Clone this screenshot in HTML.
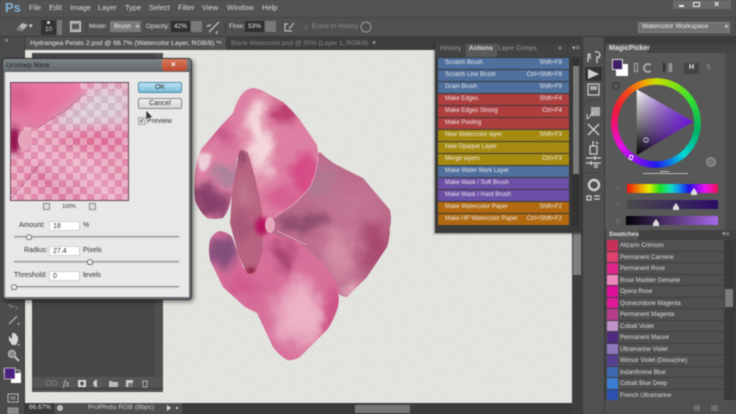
<!DOCTYPE html>
<html><head><meta charset="utf-8"><style>
*{box-sizing:border-box}
html,body{margin:0;padding:0;width:736px;height:414px;overflow:hidden;background:#454545}
#r{position:absolute;left:0;top:0;width:736px;height:414px;overflow:hidden;font-family:"Liberation Sans",sans-serif;filter:blur(.45px)}
#r div,#r span.a{position:absolute}
.t{white-space:nowrap;color:#d8d8d8;font-size:7px;line-height:10px}
.row{left:438px;width:131px;height:11px;color:#e8e8e8;font-size:6px;line-height:11px;padding-left:7px;white-space:nowrap}
.row b{position:absolute;right:7px;top:0;font-weight:normal}
.sw{left:606px;width:118px;height:11.5px;border-bottom:1px solid #3f3f3f;color:#dcdcdc;font-size:6px;line-height:12px;padding-left:14px;white-space:nowrap;background:#505050}
.sw i{position:absolute;left:1px;top:0;width:10.5px;height:10.5px}
.d{color:#333;font-size:7px;line-height:10px;white-space:nowrap}
.f{background:#fff;border:1px solid #d0d0d0;color:#333;font-size:7px;line-height:9px;padding-left:3px}
.tr{height:2px;background:#8f8f8f;border-bottom:1px solid #c8c8c8}
.h{width:6px;height:6px;background:#eee;border:1px solid #777;border-radius:50% 50% 2px 2px}
</style></head><body><div id="r">

<!-- menu bar -->
<div style="left:0;top:0;width:736px;height:17px;background:#535353"></div>
<div class="t" style="left:5px;top:1px;font-size:13px;line-height:14px;font-weight:bold;color:#7fb2d8">Ps</div>
<div class="t" style="left:29px;top:3px;font-size:7.5px">File</div>
<div class="t" style="left:49px;top:3px;font-size:7.5px">Edit</div>
<div class="t" style="left:70px;top:3px;font-size:7.5px">Image</div>
<div class="t" style="left:98px;top:3px;font-size:7.5px">Layer</div>
<div class="t" style="left:125px;top:3px;font-size:7.5px">Type</div>
<div class="t" style="left:149px;top:3px;font-size:7.5px">Select</div>
<div class="t" style="left:178px;top:3px;font-size:7.5px">Filter</div>
<div class="t" style="left:202px;top:3px;font-size:7.5px">View</div>
<div class="t" style="left:227px;top:3px;font-size:7.5px">Window</div>
<div class="t" style="left:262px;top:3px;font-size:7.5px">Help</div>
<div style="left:673px;top:0;width:58px;height:9px;background:#6a6a6a"></div>
<div style="left:679px;top:5px;width:5px;height:2px;background:#eee"></div>
<div style="left:693px;top:2px;width:7px;height:5px;border:1px solid #eee"></div>
<div class="t" style="left:714px;top:-1px;font-size:9px;font-weight:bold;color:#eee">×</div>

<!-- options bar -->
<div style="left:0;top:17px;width:736px;height:20px;background:#505050;border-top:1px solid #444;border-bottom:1px solid #3a3a3a"></div>
<svg style="position:absolute;left:14px;top:21px" width="16" height="12"><path d="M2 9 L8 2 L14 4 L8 10 Z" fill="#b5b5b5"/><path d="M2 9 L5 6 L9 8 L7 10Z" fill="#777"/></svg>
<div class="t" style="left:29px;top:22px;color:#ddd">▾</div>
<div style="left:41px;top:20px;width:15px;height:15px;background:#333"></div>
<div style="left:47px;top:21px;width:3px;height:3px;border-radius:2px;background:#ddd"></div>
<div class="t" style="left:45px;top:25px;font-size:6.5px">10</div>
<div style="left:57px;top:20px;width:5px;height:15px;background:#777"></div>
<div style="left:70px;top:21px;width:11px;height:11px;background:#a5a5a5;border:1px solid #ccc"></div>
<div style="left:72px;top:24px;width:7px;height:5px;background:#555"></div>
<div style="left:86px;top:22px;width:1px;height:11px;background:#3f3f3f"></div>
<div class="t" style="left:89px;top:22px;font-size:6.5px;color:#ddd">Mode:</div>
<div style="left:110px;top:21px;width:31px;height:11px;background:#7a7a7a"></div>
<div class="t" style="left:114px;top:22px;font-size:6.5px;color:#eee">Brush</div>
<div class="t" style="left:135px;top:22px;font-size:6px;color:#eee">≑</div>
<div class="t" style="left:146px;top:22px;font-size:6.5px;color:#ddd">Opacity:</div>
<div style="left:171px;top:21px;width:19px;height:11px;background:#2f2f2f"></div>
<div class="t" style="left:174px;top:22px;font-size:6.5px;color:#eee">42%</div>
<div style="left:191px;top:21px;width:11px;height:11px;background:#7a7a7a"></div>
<svg style="position:absolute;left:207px;top:20px" width="14" height="14"><path d="M2 12 L12 2 M4 5 A6 6 0 1 0 10 11" stroke="#bbb" stroke-width="1.4" fill="none"/></svg>
<div style="left:225px;top:22px;width:1px;height:11px;background:#3f3f3f"></div>
<div class="t" style="left:229px;top:22px;font-size:6.5px;color:#ddd">Flow:</div>
<div style="left:245px;top:21px;width:19px;height:11px;background:#2f2f2f"></div>
<div class="t" style="left:248px;top:22px;font-size:6.5px;color:#eee">53%</div>
<div style="left:265px;top:21px;width:11px;height:11px;background:#7a7a7a"></div>
<svg style="position:absolute;left:282px;top:20px" width="14" height="14"><path d="M2 4 H6 M3 4 V11 H10 M7 9 L12 3" stroke="#bbb" stroke-width="1.2" fill="none"/></svg>
<div style="left:303px;top:23px;width:6px;height:9px;background:#5d5d5d;border:1px solid #484848"></div>
<div class="t" style="left:312px;top:22px;font-size:6.5px;color:#8e8e8e">Erase to History</div>
<svg style="position:absolute;left:360px;top:21px" width="14" height="12"><circle cx="6" cy="6" r="5" stroke="#999" fill="none"/></svg>
<div style="left:638px;top:22px;width:92px;height:11px;background:#707070;border:1px solid #808080"></div>
<div class="t" style="left:642px;top:22px;font-size:6.6px;color:#eee">Watercolor Workspace</div>
<div class="t" style="left:724px;top:22px;font-size:6px;color:#eee">≑</div>

<!-- tabs -->
<div style="left:0;top:37px;width:736px;height:13px;background:#3e3e3e"></div>
<div style="left:25px;top:37px;width:201px;height:13px;background:#535353"></div>
<div class="t" style="left:30px;top:39px;font-size:6.8px;color:#e8e8e8">Hydrangea Petals 2.psd @ 66.7% (Watercolor Layer, RGB/8) *</div>
<div class="t" style="left:218px;top:39px;font-size:7px;color:#ccc">×</div>
<div class="t" style="left:231px;top:39px;font-size:6.6px;color:#8a8a8a">Blank Watercolor.psd @ 50% (Layer 1, RGB/8)</div>
<div class="t" style="left:372px;top:39px;font-size:7px;color:#ccc">×</div>

<!-- left toolbar -->
<div style="left:0;top:37px;width:25px;height:377px;background:#4c4c4c;border-right:1px solid #3a3a3a"></div>
<div class="t" style="left:5px;top:36px;font-size:6px;color:#ccc">»</div>

<!-- canvas -->
<div style="left:25px;top:50px;width:547px;height:353px;background:#e4e5e0"></div>
<svg style="position:absolute;left:25px;top:50px" width="547" height="353"><filter id="pp"><feTurbulence type="fractalNoise" baseFrequency=".35 .5" numOctaves="3" seed="4"/><feColorMatrix values="0 0 0 0 .45 0 0 0 0 .45 0 0 0 0 .42 .5 .5 0 0 -.42"/></filter><rect width="547" height="353" filter="url(#pp)" opacity=".35"/></svg>

<!-- flower -->
<svg style="position:absolute;left:0;top:0" width="736" height="414" viewBox="0 0 736 414">
<defs>
<filter id="b6" x="-100%" y="-100%" width="300%" height="300%"><feGaussianBlur stdDeviation="8"/></filter>
<filter id="b3" x="-100%" y="-100%" width="300%" height="300%"><feGaussianBlur stdDeviation="5"/></filter>
<filter id="b2" x="-100%" y="-100%" width="300%" height="300%"><feGaussianBlur stdDeviation="2"/></filter>
<filter id="wet" x="-10%" y="-10%" width="120%" height="120%"><feTurbulence type="fractalNoise" baseFrequency=".045" numOctaves="3" seed="7" result="n"/><feDisplacementMap in="SourceGraphic" in2="n" scale="20" xChannelSelector="R" yChannelSelector="G"/></filter>
<filter id="edge" x="-5%" y="-5%" width="110%" height="110%"><feGaussianBlur stdDeviation=".5"/></filter>
<clipPath id="pr"><path d="M320 152 Q328 160 337 165 Q350 172 363 178 L390 210 Q392 220 390 227 Q390 238 387 247 L367 277 L347 297 Q342 297 338 293 L320 300 L262 240 L262 215 L300 170Z"/></clipPath>
<clipPath id="pt"><path d="M252 88 Q258 88 265 92 L283 102 Q292 110 300 120 L317 145 Q319 155 318 163 Q316 176 310 187 Q302 197 293 205 L275 217 L268 228 L258 225 L255 197 L248 160 Q243 155 237 157 L235 180 L230 203 Q228 212 223 218 Q214 220 207 218 Q198 210 195 200 Q193 180 197 160 Q199 152 203 147 L220 127 L233 113 Q236 103 240 97 Q245 89 252 88Z"/></clipPath>
<clipPath id="pb"><path d="M220 231 Q228 232 232 237 L243 267 Q248 274 253 273 Q260 262 263 247 L262 230 L277 235 L300 243 L323 263 L337 283 Q340 295 338 307 Q334 320 327 330 L300 357 Q293 361 287 360 Q279 355 273 347 L257 313 L245 307 L223 287 L210 260 Q208 248 210 240 Q214 232 220 231Z"/></clipPath>
<clipPath id="ps"><path d="M240 150 Q245 150 248 153 L255 177 L262 210 L263 250 Q260 263 255 272 Q251 275 247 273 Q241 262 237 250 L230 223 L232 193 L237 163 Q238 155 240 150Z"/></clipPath>
</defs>
<g clip-path="url(#pr)"><g filter="url(#wet)">
<rect x="240" y="130" width="170" height="190" fill="#bd6c8b"/>
<ellipse cx="375" cy="248" rx="20" ry="24" fill="#a84a70" filter="url(#b6)"/>
<ellipse cx="350" cy="205" rx="26" ry="18" fill="#c37594" filter="url(#b6)"/>
<ellipse cx="340" cy="252" rx="18" ry="22" fill="#d590a9" filter="url(#b6)"/>
<ellipse cx="350" cy="290" rx="12" ry="10" fill="#dfa6b6" filter="url(#b3)"/>
<ellipse cx="300" cy="222" rx="28" ry="7" fill="#87486b" filter="url(#b3)"/>
<ellipse cx="322" cy="183" rx="14" ry="16" fill="#ad7b94" filter="url(#b6)"/>
</g></g>
<g clip-path="url(#pb)"><g filter="url(#wet)">
<rect x="190" y="215" width="165" height="160" fill="#d7709a"/>
<ellipse cx="300" cy="315" rx="26" ry="32" fill="#ecb2c6" filter="url(#b6)"/>
<ellipse cx="222" cy="252" rx="16" ry="17" fill="#82507c" filter="url(#b3)"/>
<ellipse cx="284" cy="256" rx="10" ry="20" fill="#a84472" filter="url(#b3)" transform="rotate(-25 284 256)"/>
<ellipse cx="245" cy="285" rx="20" ry="12" fill="#d0558a" filter="url(#b6)"/>
<ellipse cx="333" cy="310" rx="8" ry="24" fill="#cc4f82" filter="url(#b3)"/>
</g></g>
<g clip-path="url(#pt)"><g filter="url(#wet)">
<rect x="180" y="75" width="155" height="160" fill="#dd80a3"/>
<path d="M252 95 L264 95 L272 165 L258 185 L247 130Z" fill="#f5dbdd" filter="url(#b3)"/>
<ellipse cx="285" cy="112" rx="15" ry="11" fill="#bb3d6f" filter="url(#b3)"/>
<ellipse cx="305" cy="175" rx="13" ry="24" fill="#d54b86" filter="url(#b3)"/>
<ellipse cx="282" cy="200" rx="16" ry="12" fill="#d2558a" filter="url(#b6)"/>
<ellipse cx="222" cy="134" rx="15" ry="14" fill="#cb5c8c" filter="url(#b3)"/>
<ellipse cx="210" cy="203" rx="18" ry="18" fill="#87406a" filter="url(#b3)"/>
<ellipse cx="226" cy="172" rx="11" ry="9" fill="#a28399" filter="url(#b3)"/>
<ellipse cx="203" cy="160" rx="8" ry="9" fill="#ecd0d8" filter="url(#b2)"/>
</g></g>
<path d="M318 157 Q316 176 310 187 Q302 197 293 205 L275 217" fill="none" stroke="#eec7d3" stroke-width=".7" opacity=".8"/>
<path d="M277 231 L307 245" fill="none" stroke="#e9c0cf" stroke-width=".7" opacity=".8"/>
<g clip-path="url(#ps)"><g filter="url(#wet)">
<rect x="215" y="135" width="60" height="150" fill="#b76481"/>
<ellipse cx="240" cy="158" rx="7" ry="9" fill="#9a5070" filter="url(#b2)"/>
<ellipse cx="245" cy="195" rx="10" ry="15" fill="#c0778d" filter="url(#b3)"/>
<ellipse cx="241" cy="228" rx="9" ry="14" fill="#a55676" filter="url(#b3)"/>
</g><ellipse cx="251" cy="271" rx="5" ry="3" fill="#8d1638" filter="url(#b2)"/></g>
<ellipse cx="262" cy="226" rx="7" ry="9" fill="#b4155e" filter="url(#b2)"/>
<ellipse cx="270" cy="225" rx="5" ry="8" fill="#e5a8bb"/>
</svg>

<!-- layers panel behind dialog -->
<div style="left:32px;top:53px;width:131px;height:339px;background:#474747;border-right:8px solid #505050"></div>
<div style="left:32px;top:377px;width:131px;height:15px;background:#555"></div>
<div style="left:32px;top:388px;width:131px;height:4px;background:#505050;border-top:1px solid #3a3a3a"></div>
<svg style="position:absolute;left:40px;top:378px" width="115" height="11">
<path d="M6 5 a2.5 2.5 0 1 1 0 .1 M12 5 a2.5 2.5 0 1 1 0 .1" stroke="#777" fill="none"/>
<text x="23" y="8.5" font-family="Liberation Serif" font-style="italic" font-size="9" fill="#ccc">fx</text>
<rect x="38" y="2" width="8" height="7" fill="#ddd"/><circle cx="42" cy="5.500" r="2" fill="#555"/>
<circle cx="57" cy="5.500" r="3.800" fill="#ccc"/><path d="M57 1.700 A3.800 3.800 0 0 1 57 9.300Z" fill="#555"/>
<path d="M69 3 h3 l1 1 h5 v5 h-9z" fill="#bbb"/>
<rect x="86" y="2" width="7" height="7" fill="#ccc"/><rect x="88" y="5" width="5" height="4" fill="#777"/>
<path d="M102 3 h6 M103 3 v6 h4 v-6" stroke="#aaa" fill="none"/>
</svg>

<!-- toolbar icons below dialog -->
<svg style="position:absolute;left:0;top:298px" width="25" height="116">
<path d="M9 6 l2 3 l3 -1 M16 9 l2 2" stroke="#bbb" fill="none" stroke-dasharray="1.500 1"/>
<path d="M9 26 L17 18" stroke="#ccc" stroke-width="1"/><rect x="18" y="25" width="1.500" height="1.500" fill="#ccc"/>
<path d="M9 38 v4 l3 5 h4 l2-4 v-5 h-1.500 v3 v-5 h-1.500 v4 v-5 h-1.500 v5 v-5 h-1.500 v6z" fill="#d8d8d8"/>
<rect x="18" y="46" width="1.500" height="1.500" fill="#ccc"/>
<circle cx="12" cy="56" r="3.600" fill="#8a8a8a" stroke="#c5c5c5"/><path d="M15 59 L19 63" stroke="#c5c5c5" stroke-width="2"/>
<rect x="4" y="71" width="4" height="4" fill="#222" stroke="#ccc" stroke-width=".7"/><rect x="7" y="74" width="3" height="3" fill="#eee"/>
<path d="M15 72 h3 a2 2 0 0 1 2 2 v2" stroke="#ccc" fill="none"/>
<rect x="11" y="75" width="10" height="10" fill="#fff"/>
<rect x="4.500" y="69" width="10.500" height="11" fill="#4d2180" stroke="#ddd" stroke-width=".7" transform="translate(0 1)"/>
<rect x="8" y="96" width="10" height="8" fill="#444" stroke="#bbb"/><rect x="10" y="98" width="6" height="4" fill="#777"/>
<rect x="8" y="110" width="10" height="6" fill="#888" stroke="#bbb" stroke-width=".6"/>
</svg>

<!-- dialog -->
<div style="left:2px;top:58px;width:190px;height:242px;background:#6d7477;border:1px solid #333;border-radius:4px;box-shadow:2px 2px 4px rgba(0,0,0,.45)"></div>
<div style="left:3px;top:59px;width:188px;height:13px;background:linear-gradient(#7d8487,#5f6669);border-radius:3px 3px 0 0"></div>
<div class="t" style="left:6px;top:61px;font-size:6.8px;color:#222">Unsharp Mask</div>
<div style="left:162px;top:59px;width:25px;height:12px;background:linear-gradient(#d87a5a,#c04a30);border-radius:0 0 3px 3px"></div>
<div class="t" style="left:171px;top:60px;color:#fff;font-weight:bold;font-size:8px">×</div>
<div style="left:5px;top:72px;width:184px;height:225px;background:#e8e8e8"></div>

<!-- preview -->
<svg style="position:absolute;left:10px;top:82px" width="119" height="119" viewBox="0 0 119 119">
<defs>
<pattern id="ck" width="14" height="14" patternUnits="userSpaceOnUse"><rect width="14" height="14" fill="rgba(235,225,230,.12)"/><rect width="7" height="7" fill="rgba(255,255,255,.34)"/><rect x="7" y="7" width="7" height="7" fill="rgba(255,255,255,.34)"/></pattern>
<clipPath id="cc"><path d="M0 44 L28 46 L56 28 L73 13 L69 0 H119 V119 H0Z"/></clipPath>
<filter id="pb2" x="-60%" y="-60%" width="220%" height="220%"><feGaussianBlur stdDeviation="7"/></filter>
<filter id="pb3" x="-60%" y="-60%" width="220%" height="220%"><feGaussianBlur stdDeviation="3"/></filter>
</defs>
<rect width="119" height="119" fill="#df7fa3"/>
<ellipse cx="40" cy="15" rx="40" ry="25" fill="#e7739f" filter="url(#pb2)"/>
<ellipse cx="66" cy="6" rx="15" ry="8" fill="#ef7caa" filter="url(#pb2)"/>
<ellipse cx="8" cy="15" rx="12" ry="12" fill="#d35c8c" filter="url(#pb2)"/>
<path d="M40 42 L85 5 H119 V40 L60 48Z" fill="#cdb8c6" filter="url(#pb2)"/>
<ellipse cx="85" cy="58" rx="34" ry="8" fill="#d64f80" filter="url(#pb2)"/>
<ellipse cx="45" cy="100" rx="28" ry="9" fill="#cf4f84" filter="url(#pb2)" transform="rotate(35 45 100)"/>
<path d="M28 70 L62 112 M60 72 L105 119" stroke="#efc4d6" stroke-width="5" filter="url(#pb2)"/>
<rect width="119" height="119" fill="url(#ck)" clip-path="url(#cc)"/>
<ellipse cx="4" cy="58" rx="7" ry="14" fill="#95124f" filter="url(#pb3)"/>
<ellipse cx="15" cy="58" rx="7" ry="10" fill="#e5a3bc"/>
<path d="M0 118 L30 82 M28 46 L56 28 L73 13" stroke="#7a2d55" stroke-width=".6" opacity=".5" fill="none"/>
<rect x=".5" y=".5" width="118" height="118" fill="none" stroke="#6a4a5a"/>
</svg>
<div style="left:43px;top:203px;width:7px;height:7px;border:1px solid #888;background:#ddd"></div>
<div class="d" style="left:62px;top:202px;font-size:5.500px">100%</div>
<div style="left:89px;top:203px;width:7px;height:7px;border:1px solid #888;background:#ddd"></div>

<!-- buttons -->
<div style="left:138px;top:82px;width:44px;height:11px;background:linear-gradient(#bfe4f4,#79bcd8);border:1px solid #4e8aa8;border-radius:2px"></div>
<div class="d" style="left:138px;top:83px;width:44px;text-align:center;font-size:7px">OK</div>
<div style="left:138px;top:98px;width:44px;height:11px;background:linear-gradient(#efefef,#d5d5d5);border:1px solid #888;border-radius:2px"></div>
<div class="d" style="left:138px;top:99px;width:44px;text-align:center;font-size:7px">Cancel</div>
<div style="left:138px;top:117px;width:8px;height:8px;background:#d5d5d5;border:1px solid #aaa"></div>
<div class="d" style="left:139px;top:117px;font-size:7px">✓</div>
<div class="d" style="left:147px;top:117px;font-size:7px">Preview</div>
<svg style="position:absolute;left:145px;top:109px" width="10" height="14"><path d="M1 1 V11 L3.500 9 L5 12.500 L6.500 12 L5 8.500 H8Z" fill="#333" stroke="#eee" stroke-width=".6"/></svg>

<!-- controls -->
<div class="d" style="left:19px;top:221px">Amount:</div>
<div class="f" style="left:49px;top:221px;width:31px;height:10px">18</div>
<div class="d" style="left:83px;top:221px">%</div>
<div class="tr" style="left:14px;top:236px;width:165px"></div>
<div class="h" style="left:26px;top:234px"></div>
<div class="d" style="left:24px;top:246px">Radius:</div>
<div class="f" style="left:49px;top:246px;width:31px;height:10px">27.4</div>
<div class="d" style="left:83px;top:246px">Pixels</div>
<div class="tr" style="left:14px;top:261px;width:165px"></div>
<div class="h" style="left:87px;top:259px"></div>
<div class="d" style="left:14px;top:271px">Threshold:</div>
<div class="f" style="left:49px;top:271px;width:31px;height:10px">0</div>
<div class="d" style="left:83px;top:271px">levels</div>
<div class="tr" style="left:14px;top:286px;width:165px"></div>
<div class="h" style="left:11px;top:284px"></div>

<!-- status bar -->
<div style="left:25px;top:403px;width:547px;height:11px;background:#4f4f4f"></div>
<div style="left:25px;top:403px;width:29px;height:11px;background:#3a3a3a"></div>
<div class="t" style="left:29px;top:403px;font-size:6.500px;color:#ddd">66.67%</div>
<div style="left:57px;top:405px;width:6px;height:6px;border-radius:50%;background:#bbb"></div>
<div class="t" style="left:88px;top:403px;font-size:6.800px;color:#ccc">ProPhoto RGB (8bpc)</div>
<div style="left:167px;top:405px;width:0;height:0;border-left:4px solid #ddd;border-top:3px solid transparent;border-bottom:3px solid transparent"></div>
<div style="left:176px;top:407px;width:2px;height:2px;background:#ccc"></div>
<div style="left:182px;top:403px;width:390px;height:11px;background:#3b3b3b"></div>
<div style="left:355px;top:405px;width:55px;height:8px;background:#767676"></div>

<!-- scroll + dock + right panels base -->
<div style="left:572px;top:50px;width:10px;height:364px;background:#3e3e3e"></div>
<div style="left:573px;top:65px;width:8px;height:210px;background:#7e7e7e"></div>
<div style="left:582px;top:37px;width:23px;height:377px;background:#505050;border-left:1px solid #3a3a3a;border-right:1px solid #3a3a3a"></div>
<div style="left:605px;top:37px;width:131px;height:377px;background:#3c3c3c"></div>

<!-- actions panel -->
<div style="left:435px;top:43px;width:147px;height:190px;background:#3a3a3a;box-shadow:-1px 1px 2px rgba(0,0,0,.4)"></div>
<div style="left:435px;top:43px;width:147px;height:14px;background:#434343"></div>
<div style="left:466px;top:44px;width:31px;height:13px;background:#5a5a5a"></div>
<div class="t" style="left:440px;top:44px;font-size:6.800px;color:#999">History</div>
<div class="t" style="left:469px;top:44px;font-size:6.500px;font-weight:bold;color:#ddd">Actions</div>
<div class="t" style="left:498px;top:44px;font-size:6.500px;color:#999">Layer Comps</div>
<div class="t" style="left:558px;top:44px;font-size:7px;color:#ccc">»</div>
<div class="t" style="left:572px;top:44px;font-size:7px;color:#aaa">▾≡</div>
<div class="row" style="top:58px;background:#4f6f9c">Scratch Brush<b>Shift+F8</b></div>
<div class="row" style="top:70px;background:#4f6f9c">Scratch Line Brush<b>Ctrl+Shift+F8</b></div>
<div class="row" style="top:82px;background:#4f6f9c">Grain Brush<b>Shift+F9</b></div>
<div class="row" style="top:94px;background:#af3f3f">Make Edges<b>Shift+F4</b></div>
<div class="row" style="top:106px;background:#af3f3f">Make Edges Strong<b>Ctrl+F4</b></div>
<div class="row" style="top:118px;background:#af3f3f">Make Pooling</div>
<div class="row" style="top:130px;background:#a68a10">New Watercolor layer<b>Shift+F3</b></div>
<div class="row" style="top:142px;background:#a68a10">New Opaque Layer</div>
<div class="row" style="top:154px;background:#a68a10">Merge layers<b>Ctrl+F3</b></div>
<div class="row" style="top:166px;background:#4f6f9c">Make Water Mark Layer</div>
<div class="row" style="top:178px;background:#6c4fa6">Make Mask / Soft Brush</div>
<div class="row" style="top:190px;background:#6c4fa6">Make Mask / Hard Brush</div>
<div class="row" style="top:202px;background:#b0690f">Make Watercolor Paper<b>Shift+F2</b></div>
<div class="row" style="top:214px;background:#b0690f">Make HP Watercolor Paper<b>Ctrl+Shift+F2</b></div>
<div style="left:572px;top:58px;width:7px;height:168px;background:#333"></div>
<div style="left:573px;top:66px;width:6px;height:108px;background:#7b7b7b"></div>

<!-- dock icons -->
<svg style="position:absolute;left:583px;top:40px" width="21" height="165" fill="none" stroke="#cfcfcf">
<path d="M5 14 v8 M5 14 h2 v5 M12 12 a3 3 0 0 1 3 6 M14 16 v7" stroke-width="1.300"/>
<rect x="2" y="27" width="17" height="14" fill="#333" stroke="none"/><path d="M5 29 L16 34 L5 39Z" fill="#d0d0d0" stroke="none"/>
<rect x="5" y="44" width="11" height="11" stroke-width="1.200"/><rect x="7" y="46" width="7" height="4" fill="#aaa" stroke="none"/>
<path d="M2 60 H20" stroke="#444"/>
<rect x="8" y="67" width="9" height="9" fill="#aaa" stroke="none"/><path d="M5 79 L10 72 M4 79 V74" />
<path d="M5 84 L16 95 M16 84 L5 95" stroke-width="1.400"/>
<path d="M10 101 v5 M7 106 h7 v8 h-7z M13 102 l2 2" stroke-width="1.300"/>
<path d="M3 118 H18 M3 123 H18 M12 116 v4 M8 121 v4" stroke-width="1.300"/><circle cx="13" cy="126" r="1.500"/>
<path d="M2 133 H20" stroke="#444"/>
<circle cx="11" cy="145" r="5" stroke-width="2.400"/>
<path d="M4 156 h4 v4 h-4z M11 156 h6 M11 159 h6" stroke-width="1.200"/>
</svg>

<!-- magic picker -->
<div style="left:605px;top:44px;width:120px;height:186px;background:#585858"></div>
<div style="left:605px;top:44px;width:131px;height:9px;background:#444"></div>
<div style="left:606px;top:44px;width:41px;height:10px;background:#585858"></div>
<div class="t" style="left:609px;top:44px;font-size:7px;font-weight:bold;color:#e0e0e0;line-height:10px">MagicPicker</div>
<div style="left:725px;top:53px;width:11px;height:177px;background:#4a4a4a"></div>
<div style="left:616px;top:64px;width:12px;height:12px;background:#fff"></div>
<div style="left:612px;top:59px;width:11px;height:11px;background:#3c1e64;border:1px solid #ddd"></div>
<div style="left:634px;top:63px;width:4px;height:9px;border:1px solid #aaa"></div>
<div style="left:643px;top:63px;width:10px;height:10px;border-radius:50%;border:2.500px solid #aaa;border-right-color:#555"></div>
<div style="left:663px;top:63px;width:9px;height:9px;background:linear-gradient(90deg,#222,#aaa)"></div>
<div style="left:684px;top:63px;width:15px;height:11px;background:#444"></div>
<div class="t" style="left:689px;top:63px;font-size:7px;font-weight:bold;color:#eee">H</div>
<div class="t" style="left:706px;top:63px;font-size:7px;color:#999">S</div>
<div style="left:612px;top:82px;width:8px;height:8px;border-radius:50%;border:1.500px solid #333"></div>
<div style="left:611px;top:78px;width:90px;height:90px;border-radius:50%;background:conic-gradient(#c8e000 0deg,#38e030 55deg,#00b060 100deg,#00d8d8 140deg,#2018f0 180deg,#8010f0 205deg,#e010e8 235deg,#f0108c 262deg,#f01838 290deg,#f05018 320deg,#f0a800 345deg,#c8e000 360deg);-webkit-mask:radial-gradient(circle,transparent 38px,#000 38.500px);mask:radial-gradient(circle,transparent 38px,#000 38.500px)"></div>
<svg style="position:absolute;left:630px;top:85px" width="70" height="76" viewBox="0 0 70 76">
<defs><linearGradient id="wk" x1="0" y1="0" x2="0" y2="1"><stop offset="0" stop-color="#fff"/><stop offset="1" stop-color="#000"/></linearGradient>
<linearGradient id="pu" x1="0" y1="0" x2="1" y2="0"><stop offset="0" stop-color="#6a10d8" stop-opacity="0"/><stop offset="1" stop-color="#6a10d8"/></linearGradient></defs>
<path d="M6.700 4.300 L63.300 36.700 L6.700 70Z" fill="url(#wk)"/>
<path d="M6.700 4.300 L63.300 36.700 L6.700 70Z" fill="url(#pu)"/>
<circle cx="16" cy="55" r="2.200" fill="none" stroke="#ddd" stroke-width=".8"/>
</svg>
<div style="left:629px;top:155px;width:4px;height:5px;border:1px solid #fff;background:#7a10e0;transform:rotate(20deg)"></div>
<div style="left:706px;top:157px;width:10px;height:10px;border-radius:50%;background:#777;border:1px solid #999"></div>
<div style="left:643px;top:173px;width:45px;height:1px;background:#bbb"></div>
<div style="left:660px;top:171px;width:9px;height:1px;background:#bbb"></div>
<div class="t" style="left:616px;top:184px;font-size:6.500px;color:#777">H</div>
<div class="t" style="left:616px;top:200px;font-size:6.500px;color:#777">S</div>
<div class="t" style="left:616px;top:217px;font-size:6.500px;color:#777">B</div>
<div style="left:627px;top:184px;width:91px;height:9px;background:linear-gradient(90deg,#f01010,#f0a000 15%,#e8f000 24%,#20e020 36%,#10e0c0 48%,#1090f0 57%,#2010e8 68%,#8010f0 76%,#f010f0 86%,#f01050 100%)"></div>
<div style="left:627px;top:200px;width:91px;height:9px;background:linear-gradient(90deg,#4a4a4a,#2c0c68)"></div>
<div style="left:626px;top:216px;width:92px;height:9px;background:linear-gradient(90deg,#050208,#a868e8)"></div>
<div style="left:691px;top:188px;width:6px;height:7px;background:#ddd;clip-path:polygon(50% 0,100% 60%,100% 100%,0 100%,0 60%)"></div>
<div style="left:673px;top:203px;width:6px;height:7px;background:#ddd;clip-path:polygon(50% 0,100% 60%,100% 100%,0 100%,0 60%)"></div>
<div style="left:653px;top:219px;width:6px;height:7px;background:#ddd;clip-path:polygon(50% 0,100% 60%,100% 100%,0 100%,0 60%)"></div>

<!-- swatches -->
<div style="left:605px;top:230px;width:131px;height:10px;background:#424242"></div>
<div style="left:606px;top:230px;width:32px;height:10px;background:#565656"></div>
<div class="t" style="left:609px;top:230px;font-size:6.500px;font-weight:bold;color:#ddd">Swatches</div>
<div class="t" style="left:722px;top:230px;font-size:7px;color:#aaa">▾≡</div>
<div class="sw" style="top:240px"><i style="background:#c93059"></i>Alizarin Crimson</div>
<div class="sw" style="top:251.500px"><i style="background:#e0406e"></i>Permanent Carmine</div>
<div class="sw" style="top:263px"><i style="background:#e0268a"></i>Permanent Rose</div>
<div class="sw" style="top:274.500px"><i style="background:#ec88bc"></i>Rose Madder Genuine</div>
<div class="sw" style="top:286px"><i style="background:#de109a"></i>Opera Rose</div>
<div class="sw" style="top:297.500px"><i style="background:#de1a98"></i>Quinacridone Magenta</div>
<div class="sw" style="top:309px"><i style="background:#b73c8c"></i>Permanent Magenta</div>
<div class="sw" style="top:320.500px"><i style="background:#c090c8"></i>Cobalt Violet</div>
<div class="sw" style="top:332px"><i style="background:#4e2a80"></i>Permanent Mauve</div>
<div class="sw" style="top:343.500px"><i style="background:#9078c0"></i>Ultramarine Violet</div>
<div class="sw" style="top:355px"><i style="background:#54408f"></i>Winsor Violet (Dioxazine)</div>
<div class="sw" style="top:366.500px"><i style="background:#3c68b0"></i>Indanthrene Blue</div>
<div class="sw" style="top:378px"><i style="background:#3a7cd0"></i>Cobalt Blue Deep</div>
<div class="sw" style="top:389.500px"><i style="background:#2c50b0"></i>French Ultramarine</div>
<div style="left:725px;top:240px;width:9px;height:160px;background:#3a3a3a"></div>
<div style="left:725px;top:289px;width:8px;height:18px;background:#7c7c7c"></div>
<div style="left:605px;top:400px;width:131px;height:14px;background:#505050"></div>
<div style="left:694px;top:405px;width:6px;height:6px;background:#6f6f6f"></div>
<div style="left:711px;top:405px;width:7px;height:6px;background:#6f6f6f"></div>

</div></body></html>
